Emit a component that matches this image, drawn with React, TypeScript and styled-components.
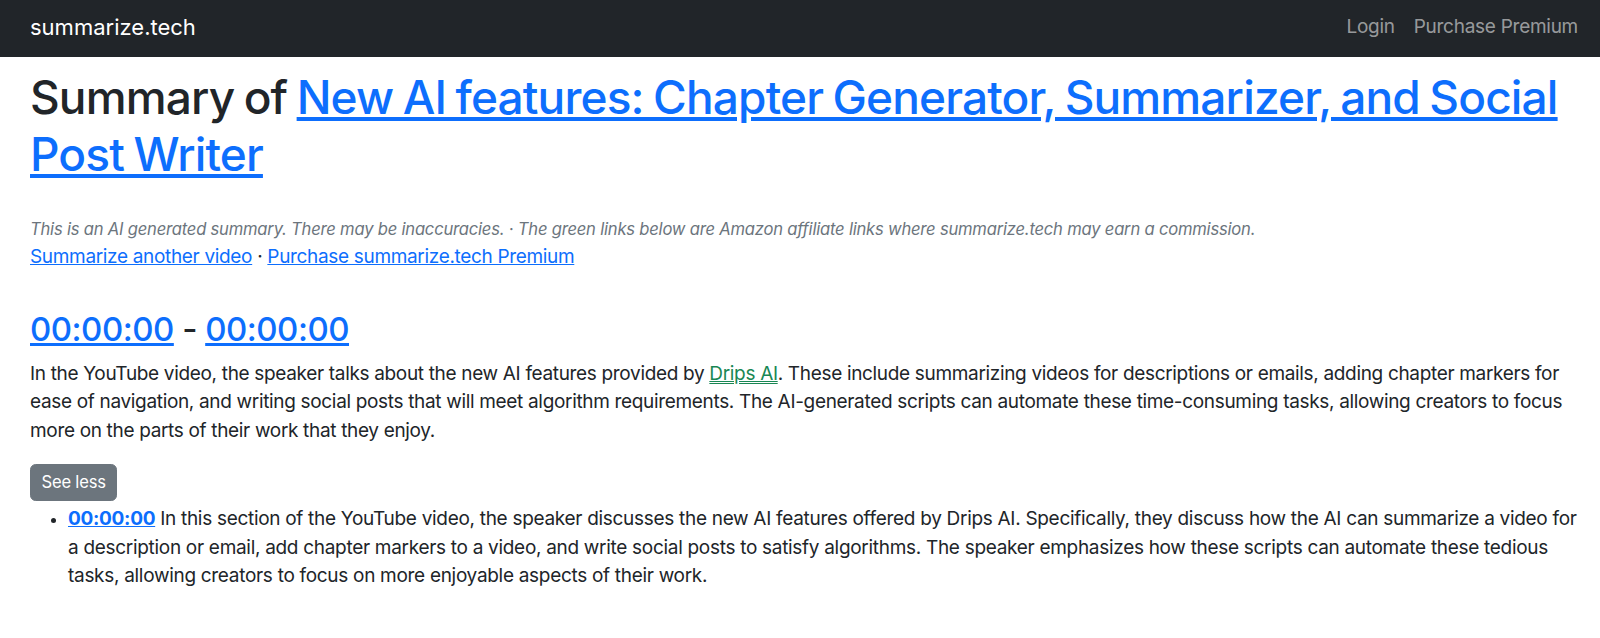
import React from 'react';
import styled, { createGlobalStyle } from 'styled-components';

const GlobalStyle = createGlobalStyle`
  * {
    box-sizing: border-box;
  }
  body {
    margin: 0;
    background: #fff;
    color: #212529;
    font-family: 'Inter', 'Noto Sans', sans-serif;
  }
`;

const Navbar = styled.nav`
  display: flex;
  align-items: flex-start;
  height: 57px;
  padding: 0 12.5px 0 30px;
  background-color: #212529;
`;

const Brand = styled.a`
  margin-top: 12px;
  font-size: 22px;
  line-height: 30px;
  color: #fff;
  text-decoration: none;
`;

const NavLinks = styled.div`
  display: flex;
  margin-left: auto;
  margin-top: 13px;
`;

const NavLink = styled.a`
  padding: 0 9.5px;
  font-size: 19px;
  line-height: 28px;
  letter-spacing: -0.27px;
  color: rgba(255, 255, 255, 0.55);
  text-decoration: none;
`;

const Main = styled.main`
  padding: 0 15px 0 30px;
`;

const Title = styled.h1`
  margin: 12px 0 0;
  font-size: 46px;
  font-weight: 500;
  line-height: 57px;
  letter-spacing: -0.85px;
  word-spacing: -2px;
`;

const Link = styled.a<{ $bold?: boolean }>`
  color: #0d6efd;
  text-decoration: underline;
  font-weight: ${(p) => (p.$bold ? 700 : 'inherit')};
`;

const AffiliateLink = styled.a`
  color: #198754;
  text-decoration: underline double;
`;

const Disclaimer = styled.div`
  margin-top: 32px;
  font-size: 16.6px;
  line-height: 28px;
  font-style: italic;
  letter-spacing: -0.21px;
  color: #6c757d;
`;

const LinksRow = styled.div`
  font-size: 19px;
  line-height: 28.5px;
  letter-spacing: -0.33px;
`;

const SectionTitle = styled.h3`
  margin: 37px 0 11px;
  font-size: 33px;
  font-weight: 500;
  line-height: 40px;
  letter-spacing: -0.5px;
`;

const Paragraph = styled.p`
  margin: 0 0 19px;
  font-size: 19px;
  line-height: 28.5px;
  letter-spacing: -0.33px;
`;

const Button = styled.button`
  display: block;
  padding: 4.75px 10.5px;
  font-family: inherit;
  font-size: 16.6px;
  line-height: 25.5px;
  letter-spacing: -0.2px;
  color: #fff;
  background-color: #6c757d;
  border: 1px solid #6c757d;
  border-radius: 5.7px;
`;

const List = styled.ul`
  margin: 4px 0 0;
  padding-left: 38px;
  font-size: 19px;
  line-height: 28.5px;
  letter-spacing: -0.3px;

  li::marker {
    font-size: 17px;
  }
`;

const App = () => {
  return (
    <>
      <GlobalStyle />
      <Navbar>
        <Brand>summarize.tech</Brand>
        <NavLinks>
          <NavLink>Login</NavLink>
          <NavLink>Purchase Premium</NavLink>
        </NavLinks>
      </Navbar>
      <Main>
        <Title>
          Summary of{' '}
          <Link>New AI features: Chapter Generator, Summarizer, and Social Post Writer</Link>
        </Title>
        <Disclaimer>
          This is an AI generated summary. There may be inaccuracies. · The green links below are
          Amazon affiliate links where summarize.tech may earn a commission.
        </Disclaimer>
        <LinksRow>
          <Link>Summarize another video</Link> · <Link>Purchase summarize.tech Premium</Link>
        </LinksRow>
        <SectionTitle>
          <Link>00:00:00</Link> - <Link>00:00:00</Link>
        </SectionTitle>
        <Paragraph>
          In the YouTube video, the speaker talks about the new AI features provided by{' '}
          <AffiliateLink>Drips AI</AffiliateLink>. These include summarizing videos for descriptions
          or emails, adding chapter markers for ease of navigation, and writing social posts that
          will meet algorithm requirements. The AI-generated scripts can automate these
          time-consuming tasks, allowing creators to focus more on the parts of their work that they
          enjoy.
        </Paragraph>
        <Button>See less</Button>
        <List>
          <li>
            <Link $bold>00:00:00</Link> In this section of the YouTube video, the speaker discusses
            the new AI features offered by Drips AI. Specifically, they discuss how the AI can
            summarize a video for a description or email, add chapter markers to a video, and write
            social posts to satisfy algorithms. The speaker emphasizes how these scripts can automate
            these tedious tasks, allowing creators to focus on more enjoyable aspects of their work.
          </li>
        </List>
      </Main>
    </>
  );
};

export default App;
